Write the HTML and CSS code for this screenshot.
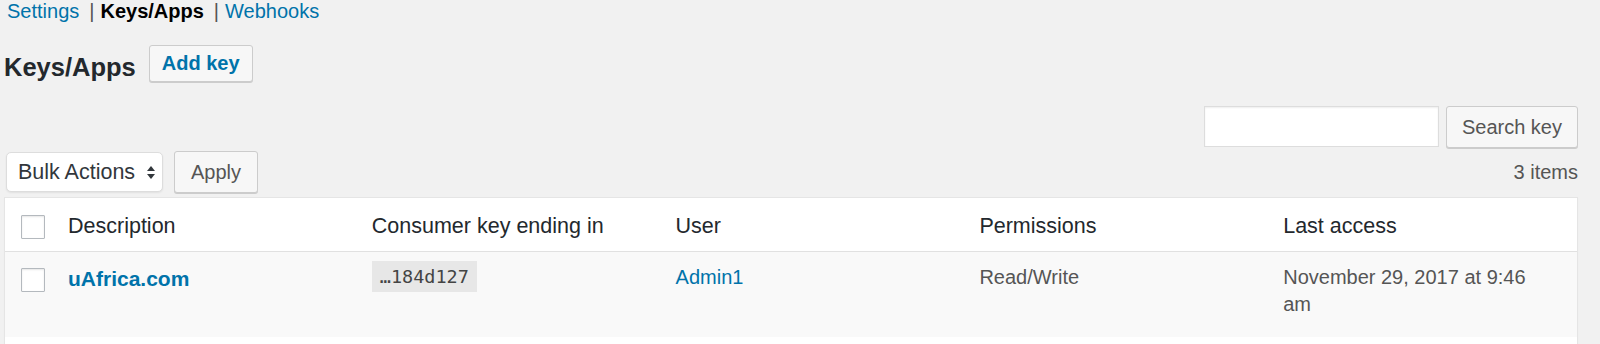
FILE: index.html
```html
<!DOCTYPE html>
<html lang="en">
  <head>
    <meta charset="UTF-8" />
    <meta name="viewport" content="width=device-width, initial-scale=1.0" />
    <title>Keys/Apps</title>
    <link rel="stylesheet" href="styles.css">
  </head>
  <body>
    <div class="wrap">
      <ul class="subsubsub">
        <li><a href="#">Settings</a><span class="sep">|</span></li>
        <li><a href="#" class="current">Keys/Apps</a><span class="sep">|</span></li>
        <li><a href="#">Webhooks</a></li>
      </ul>

      <div class="page-header">
        <h1>Keys/Apps</h1>
        <a href="#" class="button title-action">Add key</a>
      </div>

      <div class="search-box">
        <input type="search" class="search-input" />
        <button class="button">Search key</button>
      </div>

      <div class="tablenav">
        <div class="bulk-actions">
          <div class="select">
            <span>Bulk Actions</span>
            <svg width="8" height="15" viewBox="0 0 8 15">
              <polygon points="0,6 4,1 8,6" fill="#32373c" />
              <polygon points="0,9 4,14 8,9" fill="#32373c" />
            </svg>
          </div>
          <button class="button apply">Apply</button>
        </div>
        <div class="displaying-num">3 items</div>
      </div>

      <table class="keys-table">
        <colgroup>
          <col class="col-cb" />
          <col /><col /><col /><col /><col />
        </colgroup>
        <thead>
          <tr>
            <td class="check-column"><input type="checkbox" class="cb" /></td>
            <th>Description</th>
            <th>Consumer key ending in</th>
            <th>User</th>
            <th>Permissions</th>
            <th>Last access</th>
          </tr>
        </thead>
        <tbody>
          <tr class="alternate">
            <td class="check-column"><input type="checkbox" class="cb" /></td>
            <td class="column-description"><a href="#" class="row-title">uAfrica.com</a></td>
            <td><code>&hellip;184d127</code></td>
            <td><a href="#">Admin1</a></td>
            <td>Read/Write</td>
            <td class="column-last-access">November 29, 2017 at 9:46 am</td>
          </tr>
          <tr class="empty-row">
            <td></td><td></td><td></td><td></td><td></td><td></td>
          </tr>
        </tbody>
      </table>
    </div>
  </body>
</html>
```

FILE: styles.css
```css
body {
  font-family: "Liberation Sans", Arial, sans-serif;
  margin: 0;
  background-color: #f1f1f1;
  color: #555;
}
a {
  color: #0073aa;
  text-decoration: none;
}
.wrap {
  margin: 0 22px 0 4px;
}
.subsubsub {
  list-style: none;
  margin: 0;
  padding: 0 0 0 3px;
  display: flex;
  font-size: 20px;
  line-height: 22px;
}
.subsubsub .current {
  color: #000;
  font-weight: bold;
}
.sep {
  color: #555;
  margin: 0 6px 0 10px;
}
.page-header {
  display: flex;
  align-items: flex-start;
  gap: 13px;
  margin-top: 23px;
}
h1 {
  margin: 0;
  padding-top: 4px;
  font-size: 25.5px;
  line-height: 37px;
  font-weight: bold;
  color: #23282d;
}
.button {
  display: inline-flex;
  align-items: center;
  justify-content: center;
  box-sizing: border-box;
  font-family: inherit;
  font-size: 20px;
  color: #555;
  background-color: #f7f7f7;
  border: 1px solid #ccc;
  border-radius: 3px;
  box-shadow: 0 1px 0 #ccc;
  cursor: pointer;
}
.title-action {
  height: 37px;
  padding: 0 12px;
  color: #0073aa;
  font-weight: bold;
}
.search-box {
  display: flex;
  justify-content: flex-end;
  align-items: flex-start;
  gap: 7px;
  margin-top: 20px;
}
.search-input {
  box-sizing: border-box;
  width: 235px;
  height: 41px;
  margin: 0;
  border: 1px solid #ddd;
  background-color: #fff;
  box-shadow: inset 0 1px 2px rgba(0, 0, 0, 0.07);
}
.search-box .button {
  height: 42px;
  padding: 0 15px;
}
.tablenav {
  display: flex;
  justify-content: space-between;
  align-items: center;
  height: 42px;
  margin-top: 3px;
}
.bulk-actions {
  display: flex;
  align-items: center;
  gap: 11px;
  padding-left: 2px;
}
.select {
  box-sizing: border-box;
  width: 157px;
  height: 40px;
  display: flex;
  align-items: center;
  justify-content: space-between;
  padding: 0 7px 0 11px;
  background-color: #fff;
  border: 1px solid #ddd;
  border-radius: 5px;
  box-shadow: 0 1px 2px rgba(0, 0, 0, 0.07);
  font-size: 21.5px;
  color: #32373c;
}
.apply {
  height: 42px;
  padding: 0 16px;
}
.displaying-num {
  font-size: 20px;
}
.keys-table {
  width: 100%;
  margin-top: 4px;
  table-layout: fixed;
  border-collapse: separate;
  border-spacing: 0;
  background-color: #fff;
  border: 1px solid #e5e5e5;
  box-shadow: 0 1px 1px rgba(0, 0, 0, 0.04);
}
.col-cb {
  width: 53px;
}
.keys-table th,
.keys-table td {
  vertical-align: top;
  text-align: left;
  padding: 12px 10px 19px;
  font-size: 20px;
  line-height: 27px;
  color: #555;
}
.keys-table thead th,
.keys-table thead td {
  padding: 15px 10px 12px;
  font-size: 21.5px;
  line-height: 26px;
  font-weight: normal;
  color: #23282d;
  border-bottom: 1px solid #e1e1e1;
}
.keys-table .check-column {
  padding: 16px 0 0 16px;
}
.keys-table thead .check-column {
  padding: 17px 0 0 16px;
}
.cb {
  appearance: none;
  display: block;
  box-sizing: border-box;
  width: 24px;
  height: 24px;
  margin: 0;
  background-color: #fff;
  border: 1px solid #b4b9be;
  border-radius: 1px;
  box-shadow: inset 0 1px 2px rgba(0, 0, 0, 0.1);
}
.alternate td {
  background-color: #f9f9f9;
}
.keys-table .column-description {
  padding-top: 13px;
}
.row-title {
  font-size: 21px;
  font-weight: bold;
}
code {
  display: inline-block;
  vertical-align: top;
  margin-top: -3px;
  padding: 3px 8px;
  font-family: "DejaVu Sans Mono", monospace;
  font-size: 18.5px;
  line-height: 25px;
  color: #444;
  background-color: rgba(0, 0, 0, 0.07);
}
.keys-table .column-last-access {
  padding-right: 30px;
}
.empty-row td {
  height: 50px;
}
```
